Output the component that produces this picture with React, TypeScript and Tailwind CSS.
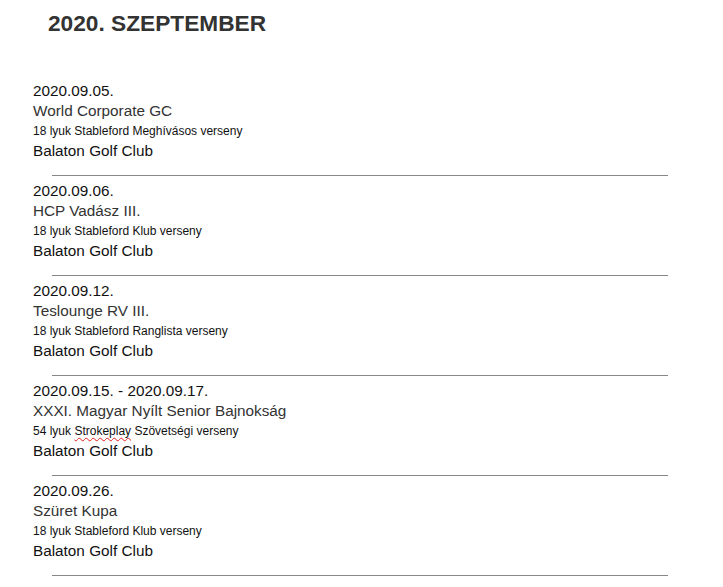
import React from 'react';

type Event = {
  date: string;
  title: string;
  kind: React.ReactNode;
  venue: string;
};

const events: Event[] = [
  {
    date: '2020.09.05.',
    title: 'World Corporate GC',
    kind: '18 lyuk Stableford Meghívásos verseny',
    venue: 'Balaton Golf Club',
  },
  {
    date: '2020.09.06.',
    title: 'HCP Vadász III.',
    kind: '18 lyuk Stableford Klub verseny',
    venue: 'Balaton Golf Club',
  },
  {
    date: '2020.09.12.',
    title: 'Teslounge RV III.',
    kind: '18 lyuk Stableford Ranglista verseny',
    venue: 'Balaton Golf Club',
  },
  {
    date: '2020.09.15. - 2020.09.17.',
    title: 'XXXI. Magyar Nyílt Senior Bajnokság',
    kind: (
      <>
        54 lyuk{' '}
        <span className="underline decoration-wavy decoration-[#e02020] decoration-1 underline-offset-2">
          Strokeplay
        </span>{' '}
        Szövetségi verseny
      </>
    ),
    venue: 'Balaton Golf Club',
  },
  {
    date: '2020.09.26.',
    title: 'Szüret Kupa',
    kind: '18 lyuk Stableford Klub verseny',
    venue: 'Balaton Golf Club',
  },
];

const App: React.FC = () => {
  return (
    <div className="min-h-[587px] bg-white font-['Liberation_Sans',Arial,sans-serif]">
      <h1 className="pt-[9px] pl-[48px] text-[22.7px] leading-[28px] font-bold text-[#333]">
        2020. SZEPTEMBER
      </h1>
      <div className="mt-[39px]">
        {events.map((ev, idx) => (
          <div key={idx}>
            <div className="pt-[5px] pb-[14px] pl-[33px]">
              <div className="text-[15.3px] leading-[20px] text-[#111]">{ev.date}</div>
              <div className="text-[15.3px] leading-[20px] text-[#333]">{ev.title}</div>
              <div className="text-[12px] leading-[20px] text-[#111]">{ev.kind}</div>
              <div className="text-[15.3px] leading-[20px] text-[#111]">{ev.venue}</div>
            </div>
            <div className="ml-[52px] w-[616px] h-px bg-[#888]" />
          </div>
        ))}
      </div>
    </div>
  );
};

export default App;
